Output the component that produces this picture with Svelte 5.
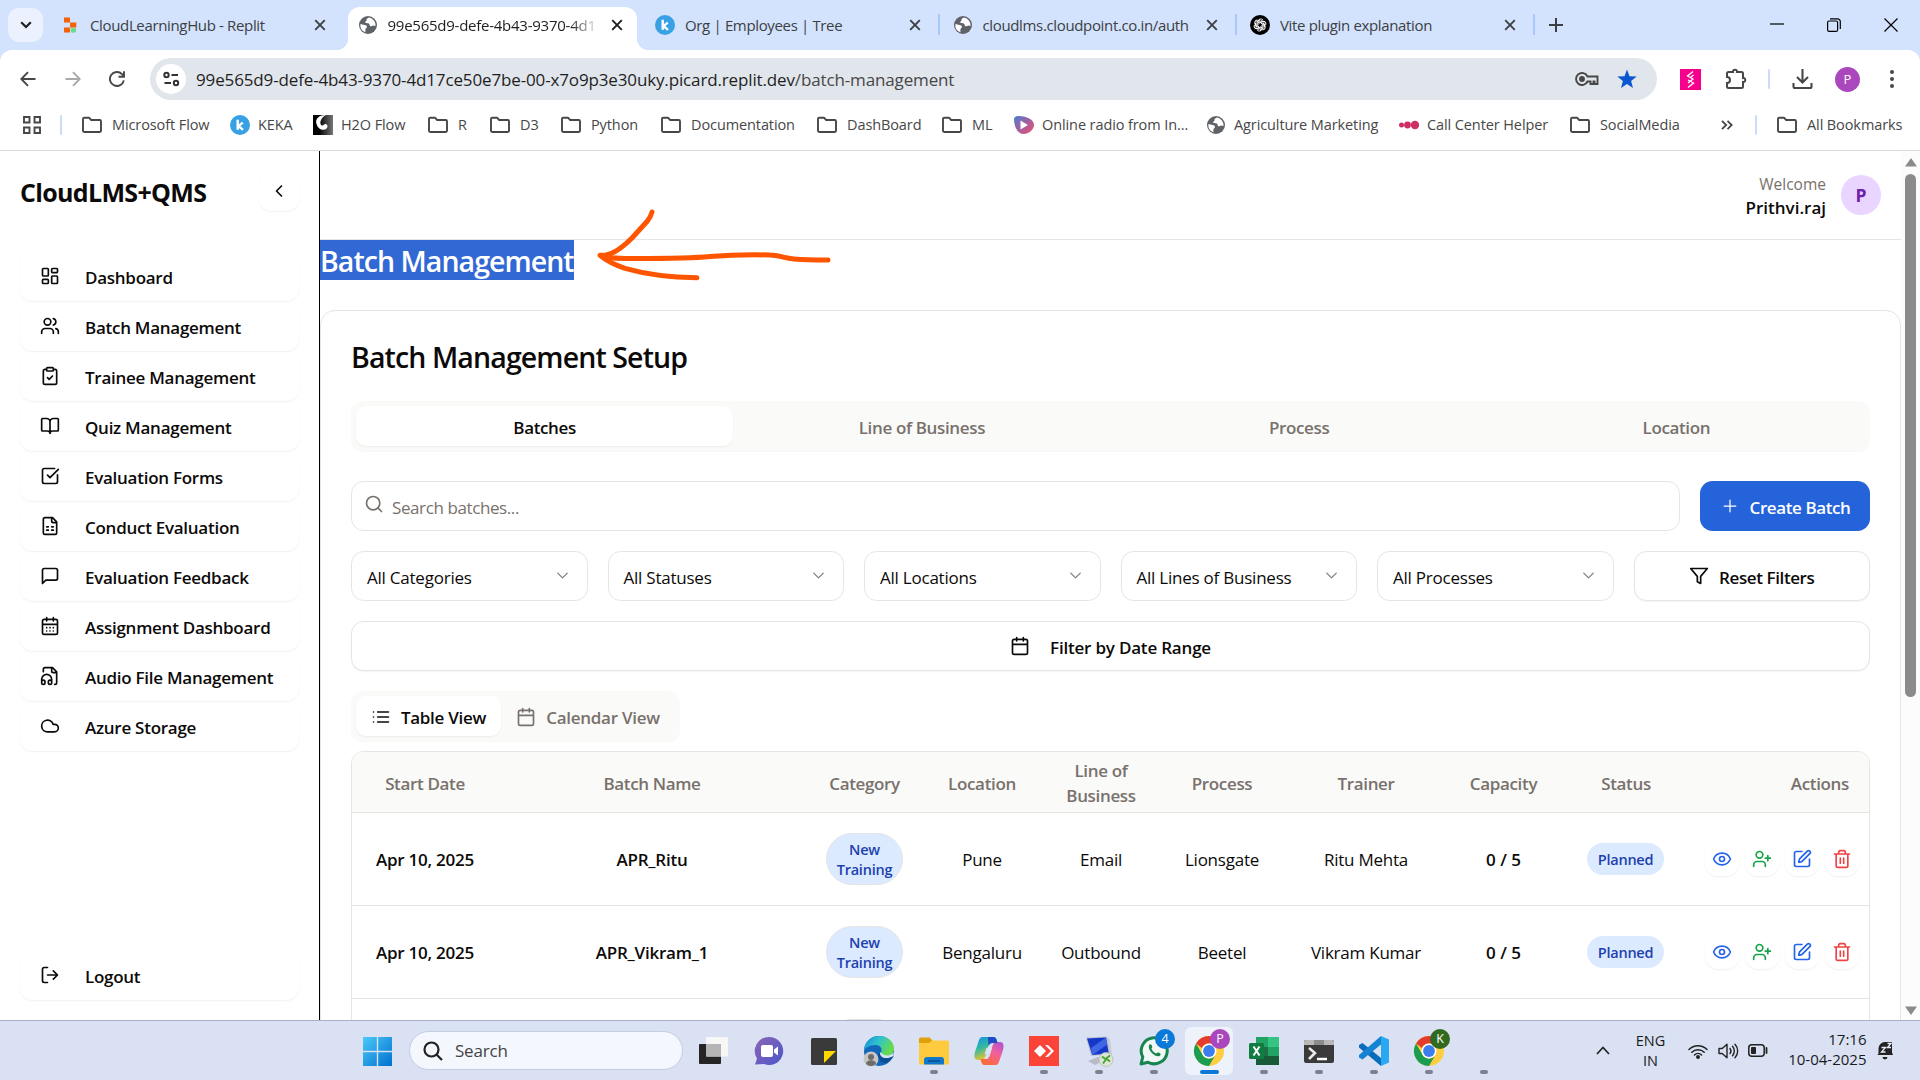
<script>
  const icons = {
    dashboard: 'M4 3h5a1 1 0 0 1 1 1v7a1 1 0 0 1-1 1H4a1 1 0 0 1-1-1V4a1 1 0 0 1 1-1zM15 3h5a1 1 0 0 1 1 1v3a1 1 0 0 1-1 1h-5a1 1 0 0 1-1-1V4a1 1 0 0 1 1-1zM15 12h5a1 1 0 0 1 1 1v7a1 1 0 0 1-1 1h-5a1 1 0 0 1-1-1v-7a1 1 0 0 1 1-1zM4 16h5a1 1 0 0 1 1 1v3a1 1 0 0 1-1 1H4a1 1 0 0 1-1-1v-3a1 1 0 0 1 1-1z',
    users: 'M16 21v-2a4 4 0 0 0-4-4H6a4 4 0 0 0-4 4v2M13 7a4 4 0 1 1-8 0a4 4 0 1 1 8 0M22 21v-2a4 4 0 0 0-3-3.87M16 3.13a4 4 0 0 1 0 7.75',
    clipboard: 'M9 2h6a1 1 0 0 1 1 1v2a1 1 0 0 1-1 1H9a1 1 0 0 1-1-1V3a1 1 0 0 1 1-1zM16 4h2a2 2 0 0 1 2 2v14a2 2 0 0 1-2 2H6a2 2 0 0 1-2-2V6a2 2 0 0 1 2-2h2M9 14l2 2 4-4',
    book: 'M12 7v14M3 18a1 1 0 0 1-1-1V4a1 1 0 0 1 1-1h5a4 4 0 0 1 4 4 4 4 0 0 1 4-4h5a1 1 0 0 1 1 1v13a1 1 0 0 1-1 1h-6a3 3 0 0 0-3 3 3 3 0 0 0-3-3z',
    check: 'M21 10.5V19a2 2 0 0 1-2 2H5a2 2 0 0 1-2-2V5a2 2 0 0 1 2-2h12.5M9 11l3 3L22 4',
    sheet: 'M15 2H6a2 2 0 0 0-2 2v16a2 2 0 0 0 2 2h12a2 2 0 0 0 2-2V7zM14 2v4a2 2 0 0 0 2 2h4M8 13h2M14 13h2M8 17h2M14 17h2',
    message: 'M21 15a2 2 0 0 1-2 2H7l-4 4V5a2 2 0 0 1 2-2h14a2 2 0 0 1 2 2z',
    days: 'M8 2v4M16 2v4M5 4h14a2 2 0 0 1 2 2v14a2 2 0 0 1-2 2H5a2 2 0 0 1-2-2V6a2 2 0 0 1 2-2zM3 10h18M8 14h.01M12 14h.01M16 14h.01M8 18h.01M12 18h.01M16 18h.01',
    audio: 'M17.5 22h.5a2 2 0 0 0 2-2V7l-5-5H6a2 2 0 0 0-2 2v3M14 2v4a2 2 0 0 0 2 2h4M2 19a2 2 0 1 1 4 0v1a2 2 0 1 1-4 0v-4a6 6 0 0 1 12 0v4a2 2 0 1 1-4 0v-1a2 2 0 1 1 4 0',
    cloud: 'M17.5 19H9a7 7 0 1 1 6.71-9h1.79a4.5 4.5 0 1 1 0 9z',
    logout: 'M9 21H5a2 2 0 0 1-2-2V5a2 2 0 0 1 2-2h4M16 17l5-5-5-5M21 12H9',
    left: 'M15 18l-6-6 6-6',
    down: 'M6 9l6 6 6-6',
    search: 'M19 11a8 8 0 1 1-16 0a8 8 0 1 1 16 0M21 21l-4.3-4.3',
    plus: 'M5 12h14M12 5v14',
    filter: 'M22 3H2l8 9.46V19l4 2v-8.54z',
    calendar: 'M8 2v4M16 2v4M5 4h14a2 2 0 0 1 2 2v14a2 2 0 0 1-2 2H5a2 2 0 0 1-2-2V6a2 2 0 0 1 2-2zM3 10h18',
    list: 'M3 6h.01M3 12h.01M3 18h.01M8 6h13M8 12h13M8 18h13',
    eye: 'M2.06 12.35a1 1 0 0 1 0-.7 10.75 10.75 0 0 1 19.88 0 1 1 0 0 1 0 .7 10.75 10.75 0 0 1-19.88 0M15 12a3 3 0 1 1-6 0a3 3 0 1 1 6 0',
    userPlus: 'M16 21v-2a4 4 0 0 0-4-4H6a4 4 0 0 0-4 4v2M13 7a4 4 0 1 1-8 0a4 4 0 1 1 8 0M19 8v6M22 11h-6',
    edit: 'M12 3H5a2 2 0 0 0-2 2v14a2 2 0 0 0 2 2h14a2 2 0 0 0 2-2v-7M18.38 2.62a1 1 0 0 1 3 3l-9.01 9.02a2 2 0 0 1-.85.5l-2.87.84a.5.5 0 0 1-.62-.62l.84-2.87a2 2 0 0 1 .5-.85z',
    trash: 'M3 6h18M19 6v14c0 1-1 2-2 2H7c-1 0-2-1-2-2V6M8 6V4c0-1 1-2 2-2h4c1 0 2 1 2 2v2M10 11v6M14 11v6'
  };

  const tabs = [
    { icon: 'replit', text: 'CloudLearningHub - Replit' },
    { icon: 'globe', text: '99e565d9-defe-4b43-9370-4d1', active: true },
    { icon: 'keka', text: 'Org | Employees | Tree', sep: true },
    { icon: 'globe', text: 'cloudlms.cloudpoint.co.in/auth', sep: true },
    { icon: 'gpt', text: 'Vite plugin explanation', sep: true }
  ];

  const bookmarks = [
    { icon: 'folder', text: 'Microsoft Flow', w: 148 },
    { icon: 'keka', text: 'KEKA', w: 83 },
    { icon: 'h2o', text: 'H2O Flow', w: 115 },
    { icon: 'folder', text: 'R', w: 62 },
    { icon: 'folder', text: 'D3', w: 71 },
    { icon: 'folder', text: 'Python', w: 100 },
    { icon: 'folder', text: 'Documentation', w: 156 },
    { icon: 'folder', text: 'DashBoard', w: 125 },
    { icon: 'folder', text: 'ML', w: 72 },
    { icon: 'radio', text: 'Online radio from In...', w: 192 },
    { icon: 'globe', text: 'Agriculture Marketing', w: 193 },
    { icon: 'dots', text: 'Call Center Helper', w: 171 },
    { icon: 'folder', text: 'SocialMedia', w: 150 }
  ];

  const nav = [
    ['dashboard', 'Dashboard'],
    ['users', 'Batch Management'],
    ['clipboard', 'Trainee Management'],
    ['book', 'Quiz Management'],
    ['check', 'Evaluation Forms'],
    ['sheet', 'Conduct Evaluation'],
    ['message', 'Evaluation Feedback'],
    ['days', 'Assignment Dashboard'],
    ['audio', 'Audio File Management'],
    ['cloud', 'Azure Storage']
  ];

  const sections = ['Batches', 'Line of Business', 'Process', 'Location'];
  const filters = ['All Categories', 'All Statuses', 'All Locations', 'All Lines of Business', 'All Processes'];
  const columns = ['Start Date', 'Batch Name', 'Category', 'Location', 'Line of Business', 'Process', 'Trainer', 'Capacity', 'Status', 'Actions'];
  const rows = [
    ['Apr 10, 2025', 'APR_Ritu', 'Pune', 'Email', 'Lionsgate', 'Ritu Mehta'],
    ['Apr 10, 2025', 'APR_Vikram_1', 'Bengaluru', 'Outbound', 'Beetel', 'Vikram Kumar'],
    ['', '', '', '', '', '']
  ];
  const tasks = [
    { n: 'view' }, { n: 'teams' }, { n: 'sticky' }, { n: 'edge' }, { n: 'explorer', run: true }, { n: 'copilot' },
    { n: 'anydesk', run: true }, { n: 'remote', run: true }, { n: 'whatsapp', run: true, badge: '4' },
    { n: 'chrome', run: true, badge: 'P', active: true }, { n: 'excel', run: true }, { n: 'terminal', run: true },
    { n: 'vscode', run: true }, { n: 'chrome', run: true, badge: 'K' }, { n: 'blank', run: true }
  ];
</script>

{#snippet ico(name, size = 20, sw = 2)}
  <svg class="ico" width={size} height={size} viewBox="0 0 24 24" fill="none" stroke="currentColor" stroke-width={sw} stroke-linecap="round" stroke-linejoin="round"><path d={icons[name]} /></svg>
{/snippet}

{#snippet closeX()}
  <svg class="close" width="12" height="12" viewBox="0 0 12 12" stroke="currentColor" stroke-width="1.9"><path d="M1.2 1.2l9.6 9.6M10.800 1.2l-9.6 9.6" /></svg>
{/snippet}

{#snippet fav(name)}
  {#if name === 'folder'}
    <svg width="20" height="20" viewBox="0 0 20 20" fill="none" stroke="#474747" stroke-width="1.9" stroke-linejoin="round"><path d="M1 15.500V4a1.200 1.200 0 0 1 1.200-1.200h5l2 2.200h8.600A1.200 1.200 0 0 1 19 6.200v9.600a1.200 1.200 0 0 1-1.200 1.200H2.200A1.200 1.200 0 0 1 1 15.800z" /></svg>
  {:else if name === 'keka'}
    <svg width="20" height="20" viewBox="0 0 20 20"><circle cx="10" cy="10" r="10" fill="#38a1e6" /><path d="M7.700 4.800v10M12.800 7.600L8.500 11l4.500 3.800" fill="none" stroke="#fff" stroke-width="2.400" /></svg>
  {:else if name === 'globe'}
    <svg width="20" height="20" viewBox="0 0 20 20"><circle cx="10" cy="10" r="9" fill="#5f6368" /><path d="M11 2.500c-1.500.7-3 1.500-2.500 2.800.4 1-1.500 1-1.300 2.200.2 1.200 3 .4 4 1.400.8.8.3 2 1.300 2.300 1.200.4 1.500-1 3-.8.900.1 1.400.7 2.100.5a8 8 0 0 0-6.600-8.400zM2.400 9c1.500 0 2.500.8 4 .9 1.600.2 2.600.7 2.500 2.100-.1 1.200-1.500 1.300-1.500 2.600v2.600A7.700 7.700 0 0 1 2.400 9z" fill="#fff" /></svg>
  {:else if name === 'replit'}
    <svg width="20" height="20" viewBox="0 0 20 20"><path d="M4 2.500h6v5H4zM10 7.500h6.300v5H10zM4 12.500h6v5H4z" fill="#f26207" /><rect x="10.700" y="12.800" width="5.400" height="5" rx="2" fill="#6fd98b" /></svg>
  {:else if name === 'gpt'}
    <svg width="20" height="20" viewBox="0 0 20 20"><circle cx="10" cy="10" r="10" fill="#000" /><g fill="none" stroke="#fff" stroke-width="1">{#each [0, 60, 120, 180, 240, 300] as a}<path transform="rotate({a} 10 10)" d="M8 10V6.300a2.700 2.700 0 0 1 5-1M8 7.700l3.400-2 2.800 1.600" />{/each}</g></svg>
  {:else if name === 'h2o'}
    <svg width="20" height="20" viewBox="0 0 20 20"><defs><linearGradient id="h2" x1="0" x2="1"><stop offset=".3" stop-color="#000" /><stop offset="1" stop-color="#777" /></linearGradient></defs><rect width="20" height="20" fill="url(#h2)" /><path d="M13 0C5.500 0 2 4 3.500 9c1.200 4.500 5 6.500 8.500 5.500 3-1 3.500-5 .5-5.500-1.500-.2-1.800 2-3.500 1.500C6 9.500 7 3 13 0z" fill="#fff" /></svg>
  {:else if name === 'radio'}
    <svg width="20" height="20" viewBox="0 0 20 20"><defs><linearGradient id="rd" x1="0" y1="0" x2="1" y2="1"><stop offset="0" stop-color="#4a7fd0" /><stop offset=".5" stop-color="#a1609f" /><stop offset="1" stop-color="#f0506e" /></linearGradient></defs><path d="M0 4C0 2 2 1 5 1c6 0 15 3 15 9 0 5-6 9-10 9C3 19 0 11 0 4z" fill="url(#rd)" /><path d="M6.500 5.500L14 10l-7.500 4.500z" fill="#fff" /></svg>
  {:else if name === 'dots'}
    <svg width="20" height="20" viewBox="0 0 20 20" fill="#cf2e63"><circle cx="2.500" cy="10" r="2.500" /><circle cx="8.500" cy="10" r="3.400" /><circle cx="16" cy="10" r="4.200" /></svg>
  {/if}
{/snippet}

{#snippet task(n)}
  <svg width="34" height="34" viewBox="0 0 34 34">
    {#if n === 'view'}
      <rect x="2" y="10" width="22" height="20" rx="1" fill="#252525" /><rect x="9" y="3" width="22" height="19.500" rx="1" fill="#f7f7f7" /><rect x="9" y="10" width="15" height="12.500" fill="#b5b5b5" />
    {:else if n === 'teams'}
      <defs><linearGradient id="tm" x1="0" x2="1" y2="1"><stop offset="0" stop-color="#8d65b4" /><stop offset="1" stop-color="#4b55cc" /></linearGradient></defs><path d="M17 3a14 14 0 1 1-5 27l-9 .5 2-6A14 14 0 0 1 17 3z" fill="url(#tm)" /><rect x="9" y="11" width="12" height="12" rx="2" fill="#fff" /><path d="M22 15.500l4-3v9l-4-3z" fill="#fff" />
    {:else if n === 'sticky'}
      <rect x="4" y="4" width="26" height="27" rx="1.500" fill="#3a3a3a" /><path d="M17 29V17h12z" fill="#ffd800" />
    {:else if n === 'edge'}
      <defs><linearGradient id="ed" x1="0" y1="0" x2="1" y2=".4"><stop offset="0" stop-color="#1687d9" /><stop offset=".5" stop-color="#2ec3cf" /><stop offset="1" stop-color="#68dc4a" /></linearGradient></defs><circle cx="17" cy="17" r="15" fill="#1267bb" /><path d="M2 17C2 8 9 2 17 2c9 0 15 6 15 12.500 0 5-4 7.500-8 7.500-4 0-6-1.500-5-3.500 2-4-1-7.500-5.500-7.500C8 11 3 14 2 17z" fill="url(#ed)" /><path d="M32 22c-5 3.500-15 2-13-4-5 1-4 10 4 11 3 0 6-3 9-7z" fill="#0b4f94" /><path d="M18 18c-1 6 7 8 13 4l1-4c-4 5-10 4-14 0z" fill="#dae3f3" /><circle cx="9" cy="25" r="7.500" fill="#c8c6c2" /><circle cx="9" cy="23" r="3" fill="#6e6c69" /><path d="M4 30c0-5 10-5 10 0a7 7 0 0 1-10 0z" fill="#6e6c69" />
    {:else if n === 'explorer'}
      <path d="M2 5a1.500 1.500 0 0 1 1.500-1.500h9L16 7v6H2z" fill="#e0a008" /><path d="M2 9h10l3-2.500h15.500A1.500 1.500 0 0 1 32 8v21a1.500 1.500 0 0 1-1.500 1.500h-27A1.500 1.500 0 0 1 2 29z" fill="#fecb3e" /><path d="M7 30.500V26a3 3 0 0 1 3-3h14a3 3 0 0 1 3 3v4.500z" fill="#0f77cc" /><path d="M11 27h12" stroke="#0a4d8c" stroke-width="1.500" />
    {:else if n === 'copilot'}
      <defs><linearGradient id="ca" x1="0" y1="0" x2=".4" y2="1"><stop offset="0" stop-color="#158fe6" /><stop offset=".5" stop-color="#32b9a0" /><stop offset="1" stop-color="#f6c626" /></linearGradient><linearGradient id="cb" x1="1" y1="0" x2=".4" y2="1"><stop offset="0" stop-color="#a951d8" /><stop offset=".5" stop-color="#f0609c" /><stop offset="1" stop-color="#fb6b3c" /></linearGradient></defs><path d="M10 3h11c3 0 3.500 2 4.500 6h-5c-3 0-4 2-5 6l-2 7c-1 3-2 4-4 4H6c-4 0-4-4-3-8l3-9c1-3 2-6 4-6z" fill="url(#ca)" /><path d="M24 31H13c-3 0-3.500-2-4.500-6h5c3 0 4-2 5-6l2-7c1-3 2-4 4-4H28c4 0 4 4 3 8l-3 9c-1 3-2 6-4 6z" fill="url(#cb)" /><path d="M16 3h5c3 0 3.500 2 4.500 6h-5c-2 0-3.500 1.500-4 3z" fill="#1f4bc4" /><path d="M14.500 14h5.500l-2 6h-5.500z" fill="#dae3f3" />
    {:else if n === 'anydesk'}
      <rect x="2" y="2" width="30" height="30" fill="#fb4437" /><path d="M13 11l6 6-6 6-6-6z" fill="#fff" /><path d="M18 11h3l6 6-6 6h-3l6-6z" fill="#fff" />
    {:else if n === 'remote'}
      <path d="M24 3l4 2 2 16-4 1z" fill="#c8ccd4" /><path d="M4 3.500l21-1 3 18-19 1.500z" fill="#b9c0d0" /><path d="M5 4.500l19-1 2.800 16-16.500 1.500z" fill="#1538c8" /><path d="M24 3.500l1.200 7L10.500 21 9 14z" fill="#3f66e6" /><path d="M6 27l10-4 7 3-10 5z" fill="#b8bcc6" /><circle cx="24" cy="25.500" r="7" fill="#dde4d8" stroke="#b4bcae" stroke-width=".8" /><path d="M20 22.500l4 3-3 4M28 21.500l-4 3 4 3" fill="none" stroke="#49a32e" stroke-width="1.800" />
    {:else if n === 'whatsapp'}
      <path d="M4 30l1.800-7A13 13 0 1 1 11 28.200z" fill="#f3f7f5" stroke="#17854f" stroke-width="3" stroke-linejoin="round" /><path d="M12 11c1.500-1.500 2.500-.5 3.200 1.500.5 1.200-1.200 1.800-.6 2.800a9 9 0 0 0 4 4c1 .5 1.600-1.200 2.800-.8 2 .8 3 1.500 1.700 3-3 3.500-13-4.500-11.100-10.500z" fill="#17854f" />
    {:else if n === 'chrome'}
      <circle cx="17" cy="17" r="15" fill="#ffcd40" /><path d="M4 9.500A15 15 0 0 1 30 9.500H17a7.500 7.500 0 0 0-7 4.500z" fill="#e33b2e" /><path d="M4 9.500a15 15 0 0 0 13 22.500l6.500-11.300a7.500 7.500 0 0 1-13 0z" fill="#1a9d50" /><circle cx="17" cy="17" r="7.500" fill="#fff" /><circle cx="17" cy="17" r="5.900" fill="#3b7ded" />
    {:else if n === 'excel'}
      <rect x="9" y="3" width="23" height="28" rx="1.500" fill="#1d7044" /><path d="M9 3h12v10H9z" fill="#21a366" /><path d="M21 3h11v10H21z" fill="#35c481" /><path d="M21 13h11v9H21z" fill="#21a366" /><path d="M9 22h23v9H9z" fill="#175c37" /><rect x="2" y="9" width="15" height="16" rx="1.500" fill="#107c41" /><path d="M6.500 12.500l6 9M12.500 12.500l-6 9" stroke="#fff" stroke-width="2" />
    {:else if n === 'terminal'}
      <rect x="2" y="6" width="30" height="23" rx="2" fill="#3a3a3a" /><path d="M4 6h26a2 2 0 0 1 2 2v3H2V8a2 2 0 0 1 2-2z" fill="#b8b8b8" /><path d="M12 6h10v5H12z" fill="#8b8b8b" /><path d="M7 14l6 5-6 6" fill="none" stroke="#eee" stroke-width="2.500" /><path d="M15 25h10" stroke="#fff" stroke-width="2.500" />
    {:else if n === 'vscode'}
      <path d="M24 32L2 13.500V11l3.500-2L24 24z" fill="#0a6cba" /><path d="M24 2v8.500L5.500 25.500 2 23.500V21z" fill="#1583d4" /><path d="M24 2l8 3.500v23L24 32z" fill="#2aa8f2" />
    {/if}
  </svg>
{/snippet}

<div class="screen">
  <header class="tabstrip">
    <div class="tabsearch"><svg width="12" height="8" viewBox="0 0 12 8" fill="none" stroke="#1f1f1f" stroke-width="2.200"><path d="M1.200 1.200L6 6l4.800-4.800" /></svg></div>
    {#each tabs as t}
      <div class="tab" class:active={t.active} class:sep={t.sep}>
        {@render fav(t.icon)}
        <span class="tabtext">{t.text}</span>
        {@render closeX()}
      </div>
    {/each}
    <svg class="newtab" width="14" height="14" viewBox="0 0 14 14" stroke="#3c3f43" stroke-width="2"><path d="M7 0v14M0 7h14" /></svg>
    <div class="winctl">
      <svg width="14" height="14" viewBox="0 0 14 14" stroke="#000" stroke-width="1.200"><path d="M0 6h14" /></svg>
      <svg width="14" height="14" viewBox="0 0 14 14" fill="none" stroke="#000" stroke-width="1.200"><rect x=".6" y="3" width="10" height="10.400" rx="1.500" /><path d="M3 .8h7.500a2.800 2.800 0 0 1 2.800 2.800V11" /></svg>
      <svg width="14" height="14" viewBox="0 0 14 14" stroke="#000" stroke-width="1.200"><path d="M.5.5l13 13M13.500.5l-13 13" /></svg>
    </div>
  </header>

  <div class="chrome">
    <div class="toolbar">
      <svg class="tb" width="16" height="16" viewBox="0 0 16 16" fill="none" stroke="#474747" stroke-width="1.900"><path d="M15.500 8H1.500M8 1.200L1.300 8 8 14.800" /></svg>
      <svg class="tb" width="16" height="16" viewBox="0 0 16 16" fill="none" stroke="#a9a9a9" stroke-width="1.900"><path d="M.5 8h14M8 1.200L14.700 8 8 14.800" /></svg>
      <svg class="tb" width="16" height="16" viewBox="0 0 16 16" fill="none" stroke="#474747" stroke-width="1.900"><path d="M14.800 9.300A7 7 0 1 1 13 3.200l1.800 1.900M15 .3v5.500H9.500" /></svg>
      <div class="omnibox">
        <div class="site"><svg width="17" height="16" viewBox="0 0 17 16" fill="none" stroke="#333" stroke-width="2"><circle cx="3.500" cy="4" r="2.200" /><path d="M8.500 4H15M1.500 12H8" /><circle cx="13" cy="12" r="2.200" /></svg></div>
        <span class="url">99e565d9-defe-4b43-9370-4d17ce50e7be-00-x7o9p3e30uky.picard.replit.dev<i>/batch-management</i></span>
        <svg class="key" width="24" height="16" viewBox="0 0 24 16" fill="none" stroke="#474747" stroke-width="1.900"><path d="M12.500 5.500A6 6 0 1 0 12.500 10.500H15.500v2.500h3v-2.500h1v2.500h3V5.500z" /><circle cx="7" cy="8" r="2" fill="#474747" /></svg>
        <svg width="20" height="20" viewBox="0 0 20 20" fill="#0b57d0"><path d="M10 .5l2.500 6.700 7.200.3-5.600 4.500 1.900 7-6-4-6 4 1.900-7L.3 7.500l7.200-.3z" /></svg>
      </div>
      <div class="ext">
        <svg width="21" height="21" viewBox="0 0 21 21"><rect width="21" height="21" fill="#f6018d" /><path d="M13 2.500L7.500 7l5.500 3-5 4M13.500 6l-3 2.500M8 11l5.500 3L8 18.500" fill="none" stroke="#fff" stroke-width="1.300" /></svg>
        <svg width="22" height="22" viewBox="0 0 22 22"><path d="M2 5.500a1.500 1.500 0 0 1 1.500-1.500H8c-.5-3 4.500-3 4 0h4.500A1.500 1.500 0 0 1 18 5.500V10c3-.5 3 4.500 0 4v4.500a1.500 1.500 0 0 1-1.500 1.500h-13A1.500 1.500 0 0 1 2 18.500V15c4 0 4-6 0-6z" fill="none" stroke="#474747" stroke-width="2" /></svg>
        <b class="bar"></b>
        <svg width="21" height="22" viewBox="0 0 21 22" fill="none" stroke="#474747" stroke-width="2.100"><path d="M10.500 1v13M5 9l5.500 5.500L16 9M1.500 15v3.500A1.500 1.500 0 0 0 3 20h15a1.500 1.500 0 0 0 1.500-1.500V15" /></svg>
        <span class="me">P</span>
        <svg width="4" height="18" viewBox="0 0 4 18" fill="#474747"><circle cx="2" cy="2" r="2" /><circle cx="2" cy="9" r="2" /><circle cx="2" cy="16" r="2" /></svg>
      </div>
    </div>
    <div class="bookmarks">
      <svg class="apps" width="18" height="18" viewBox="0 0 18 18" fill="none" stroke="#474747" stroke-width="1.900"><path d="M1 1h5.500v5.500H1zM11.500 1H17v5.500h-5.500zM1 11.500h5.500V17H1zM11.500 11.500H17V17h-5.500z" /></svg>
      <b class="bar"></b>
      {#each bookmarks as b}
        <div class="bm" class:fd={b.icon === 'folder'} style:width="{b.w}px">{@render fav(b.icon)}<span>{b.text}</span></div>
      {/each}
      <svg class="more" width="12" height="10" viewBox="0 0 12 10" fill="none" stroke="#474747" stroke-width="1.800"><path d="M1 .8L5.200 5 1 9.200M6.500.8L10.700 5 6.500 9.200" /></svg>
      <b class="bar"></b>
      <div class="bm fd last">{@render fav('folder')}<span>All Bookmarks</span></div>
    </div>
  </div>

  <div class="page">
    <aside>
      <div class="brand"><h1>CloudLMS+QMS</h1><button class="collapse">{@render ico('left')}</button></div>
      <nav>
        {#each nav as [icon, label]}
          <a class="item">{@render ico(icon)}<span>{label}</span></a>
        {/each}
      </nav>
      <a class="item logout">{@render ico('logout')}<span>Logout</span></a>
    </aside>

    <main>
      <div class="topbar">
        <div class="who"><span>Welcome</span><strong>Prithvi.raj</strong></div>
        <div class="avatar">P</div>
      </div>
      <div class="heading"><h2>Batch Management</h2>
        <svg class="arrow" width="240" height="76" viewBox="595 208 240 76" fill="none" stroke="#ff5500" stroke-width="5" stroke-linecap="round" stroke-linejoin="round">
          <path d="M652 212c-1 4-2 6-5 9.500L632 238c-11 11-20 16-26 17l-6 .3c6 5 16 10 25 13 21 6 44 9 72 9.500" /><path d="M603 257c10 1.500 20 1.500 32 1.500 35 0 55 0 75-2 20-1.600 42-1.900 60-1.500 8 0 14 3 24 4 10 .8 20 1 34 1" />
        </svg>
      </div>

      <section class="card">
        <h3>Batch Management Setup</h3>
        <div class="sections">
          {#each sections as s, i}<div class="seg" class:on={i === 0}>{s}</div>{/each}
        </div>
        <div class="searchrow">
          <div class="field search">{@render ico('search')}<span>Search batches...</span></div>
          <button class="create">{@render ico('plus', 20, 1.500)}<span>Create Batch</span></button>
        </div>
        <div class="filters">
          {#each filters as f}<div class="field select"><span>{f}</span>{@render ico('down', 19, 1.700)}</div>{/each}
          <button class="field reset">{@render ico('filter')}<span>Reset Filters</span></button>
        </div>
        <button class="field range">{@render ico('calendar')}<span>Filter by Date Range</span></button>
        <div class="views">
          <div class="view on">{@render ico('list')}<span>Table View</span></div>
          <div class="view">{@render ico('calendar')}<span>Calendar View</span></div>
        </div>
        <div class="table">
          <div class="row head">
            {#each columns as c, i}<div class="cell" class:right={i === 9}>{c}</div>{/each}
          </div>
          {#each rows as r}
            <div class="row">
              <div class="cell m">{r[0]}</div>
              <div class="cell m">{r[1]}</div>
              <div class="cell"><span class="tag new">{#if r[0]}New<br />Training{/if}</span></div>
              <div class="cell">{r[2]}</div>
              <div class="cell">{r[3]}</div>
              <div class="cell">{r[4]}</div>
              <div class="cell">{r[5]}</div>
              <div class="cell m cap">{r[0] ? '0 / 5' : ''}</div>
              <div class="cell">{#if r[0]}<span class="tag planned">Planned</span>{/if}</div>
              <div class="cell acts">
                {#if r[0]}
                  <button class="blue">{@render ico('eye')}</button>
                  <button class="green">{@render ico('userPlus')}</button>
                  <button class="blue">{@render ico('edit')}</button>
                  <button class="red">{@render ico('trash')}</button>
                {/if}
              </div>
            </div>
          {/each}
        </div>
      </section>
    </main>

    <div class="scroll">
      <svg width="12" height="9" viewBox="0 0 12 9" fill="#8b8b8b"><path d="M6 0l6 8.500H0z" /></svg>
      <div class="thumb"></div>
      <svg width="12" height="9" viewBox="0 0 12 9" fill="#8b8b8b"><path d="M6 9L0 .5h12z" /></svg>
    </div>
  </div>

  <footer class="taskbar">
    <svg class="win" width="29" height="29" viewBox="0 0 29 29"><defs><linearGradient id="w" x1="0" y1="0" x2="1" y2="1"><stop offset="0" stop-color="#4cc9f8" /><stop offset="1" stop-color="#0070d0" /></linearGradient></defs><path d="M0 0h13.800v13.800H0zM15.200 0H29v13.800H15.200zM0 15.200h13.800V29H0zM15.200 15.200H29V29H15.200z" fill="url(#w)" /></svg>
    <div class="tsearch"><svg width="20" height="20" viewBox="0 0 20 20" fill="none" stroke="#222" stroke-width="2.200"><circle cx="8.500" cy="8.500" r="7" /><path d="M13.500 13.500l5.500 5.500" /></svg><span>Search</span></div>
    {#each tasks as t}
      <div class="task" class:active={t.active}>
        <div class="tile">{@render task(t.n)}{#if t.badge}<span class="badge b{t.badge}">{t.badge}</span>{/if}</div>
        {#if t.run}<i></i>{/if}
      </div>
    {/each}
    <div class="tray">
      <svg class="up" width="14" height="9" viewBox="0 0 14 9" fill="none" stroke="#222" stroke-width="1.700"><path d="M1 8l6-6.500L13 8" /></svg>
      <div class="lang">ENG<br />IN</div>
      <svg class="wifi" width="20" height="16" viewBox="0 0 20 16" fill="none" stroke="#222" stroke-width="1.500" stroke-linecap="round"><path d="M1 6.500a12.500 12.500 0 0 1 18 0M3.800 9.300a8.600 8.600 0 0 1 12.400 0M6.500 12a5 5 0 0 1 7 0" /><circle cx="10" cy="14" r="1.200" fill="#222" /></svg>
      <svg class="snd" width="21" height="16" viewBox="0 0 21 16" fill="none" stroke="#222" stroke-width="1.400" stroke-linejoin="round" stroke-linecap="round"><path d="M1 5.500h3.200L9 1.200v13.600l-4.800-4.300H1zM12 5.500a4 4 0 0 1 0 5M14.500 3.300a7 7 0 0 1 0 9.400M17 1.200a10 10 0 0 1 0 13.600" /></svg>
      <svg class="bat" width="20" height="13" viewBox="0 0 20 13"><rect x=".8" y=".8" width="15.400" height="11.400" rx="3" fill="none" stroke="#222" stroke-width="1.500" /><rect x="3" y="3" width="5" height="7" rx="1" fill="#222" /><path d="M18.500 4v5" stroke="#222" stroke-width="1.800" stroke-linecap="round" /></svg>
      <div class="clock">17:16<br />10-04-2025</div>
      <svg class="bell" width="18" height="20" viewBox="0 0 18 20"><path d="M2.500 14V8.500A6.500 6.500 0 0 1 9 2h7v10.500l1 2.500H1z" fill="#222" /><path d="M6.500 17h5a2.500 2.500 0 0 1-5 0z" fill="#222" /><path d="M5.500 7.500h4l-4 4.500h4M11.500 3.500h3.500l-3.500 4H15" fill="none" stroke="#e8edf8" stroke-width="1.300" /></svg>
    </div>
  </footer>
</div>

<style>
  :global(body) { margin: 0; overflow: hidden; }
  * { box-sizing: border-box; }
  .screen { width: 1920px; height: 1080px; overflow: hidden; display: flex; flex-direction: column; background: #fff; font-family: 'Open Sans', 'Noto Sans', sans-serif; font-stretch: 93%; color: #0c0a09; white-space: nowrap; }
  svg { flex: none; display: block; }
  button { font: inherit; letter-spacing: inherit; color: inherit; padding: 0; margin: 0; border: 0; background: #fff; }
  h1, h2, h3 { margin: 0; }

  .tabstrip { height: 50px; flex: none; background: #d3e3fd; display: flex; align-items: center; padding-left: 8px; }
  .tabsearch { width: 35px; height: 34px; border-radius: 11px; background: #ebf1fe; display: grid; place-items: center; margin-right: 4px; }
  .tab { position: relative; width: 297.500px; height: 43px; margin-top: 7px; padding: 0 18px 7px 13px; display: flex; align-items: center; font-size: 15px; letter-spacing: -.35px; color: #3c4043; flex: none; }
  .tab > svg:first-child { z-index: 1; }
  .tab.sep::after { content: ''; position: absolute; right: 0; top: 7px; width: 2px; height: 21px; background: #a8c7fa; }
  .tab.active { color: #1f1f1f; }
  .tab.active::before { content: ''; position: absolute; left: 3px; right: 5px; top: 0; bottom: 0; background: #fff; border-radius: 12px 12px 0 0; }
  .tab.active::after { content: ''; position: absolute; left: -9px; right: -7px; bottom: 0; height: 12px; background: radial-gradient(circle at 0 0, transparent 12px, #fff 12.500px) left / 12px 12px no-repeat, radial-gradient(circle at 100% 0, transparent 12px, #fff 12.500px) right / 12px 12px no-repeat; }
  .tabtext { margin-left: 10px; z-index: 1; }
  .active .tabtext { letter-spacing: -.25px; mask-image: linear-gradient(90deg, #000 182px, transparent 212px); }
  .close { margin-left: auto; z-index: 1; margin-right: 1px; }
  .newtab { margin-left: 14px; }
  .winctl { margin-left: auto; display: flex; gap: 43px; padding-right: 22px; }

  .chrome { height: 101px; flex: none; background: linear-gradient(#d3e3fd 0 14px, #fff 14px); border-bottom: 1px solid #dcdcdc; }
  .toolbar { height: 58px; background: #fff; border-radius: 12px 12px 0 0; display: flex; align-items: center; padding-left: 20px; }
  .tb { margin-right: 28.500px; }
  .omnibox { width: 1507px; height: 42px; border-radius: 21px; background: #e1e5ec; display: flex; align-items: center; padding: 0 20px 0 6px; margin-left: -3.500px; flex: none; }
  .site { width: 30px; height: 30px; border-radius: 50%; background: #fff; display: grid; place-items: center; margin-right: 10px; }
  .url { font-size: 17px; letter-spacing: -.14px; color: #1f1f1f; flex: 1; padding-top: 1px; }
  .url i { font-style: normal; color: #474747; }
  .key { margin-right: 18px; }
  .ext { display: flex; align-items: center; margin-left: 23px; flex: 1; }
  .ext svg { margin-right: 24px; }
  .bar { width: 2px; height: 20px; background: #c9dcfb; border-radius: 1px; flex: none; }
  .ext .bar { margin-right: 22px; margin-left: -3px; }
  .me { width: 25px; height: 25px; border-radius: 50%; background: #ab47bc; color: #fff; font-size: 13px; display: grid; place-items: center; margin: 0 30px 0 -2px; }
  .ext svg:last-child { margin: 0; }
  .bookmarks { height: 34px; display: flex; align-items: center; padding-left: 23px; font-size: 14.500px; letter-spacing: -.1px; color: #474747; }
  .bookmarks span { padding-bottom: 2px; }
  .apps { margin-right: 19px; }
  .apps + .bar { margin-right: 20px; }
  .bm { display: flex; align-items: center; gap: 8px; flex: none; }
  .bm.fd { gap: 10px; }
  .more { margin-right: 22px; margin-left: 1px; }
  .more + .bar { margin-right: 20px; }

  .page { height: 869px; flex: none; display: flex; overflow: hidden; }
  aside { width: 320px; border-right: 1px solid #000; display: flex; flex-direction: column; padding: 20px 20px 20px; flex: none; }
  .brand { display: flex; justify-content: space-between; height: 40px; margin-bottom: 40px; }
  h1 { font-size: 25px; font-weight: 700; line-height: 42px; letter-spacing: -.67px; }
  .collapse { width: 40px; height: 40px; }
  .collapse, .item, .acts button { border-radius: 12.500px; box-shadow: 0 1px 2px rgba(0, 0, 0, .06); display: flex; align-items: center; justify-content: center; }
  nav { flex: 1; }
  .item { height: 50px; justify-content: flex-start; padding-left: 20px; gap: 25px; font-size: 17px; letter-spacing: -.27px; font-weight: 600; }
  .item span { padding-top: 3px; }

  main { width: 1581px; flex: none; overflow: hidden; letter-spacing: -.23px; }
  .topbar { height: 89px; border-bottom: 1px solid #e7e5e4; display: flex; justify-content: flex-end; align-items: center; padding-right: 20px; gap: 15px; }
  .who { display: flex; flex-direction: column; text-align: right; font-size: 15.500px; line-height: 24px; color: #78716c; padding-top: 2px; letter-spacing: 0; }
  .who strong { font-size: 17px; font-weight: 600; color: #0c0a09; }
  .avatar { width: 40px; height: 40px; border-radius: 50%; background: #e9d5ff; color: #6b21a8; font-size: 17.500px; font-weight: 700; display: grid; place-items: center; }
  .heading { position: relative; height: 70px; }
  h2 { width: 254px; height: 40px; line-height: 42px; background: #3268d3; color: #fff; font-size: 28.500px; font-weight: 600; letter-spacing: -.95px; }
  .arrow { position: absolute; left: 275px; top: -32px; }
  .card { border: 1px solid #e7e5e4; border-radius: 15px 15px 0 0; padding: 30px; height: 800px; }
  h3 { font-size: 28.500px; font-weight: 600; line-height: 32px; letter-spacing: -.88px; height: 60px; }
  .sections { height: 50px; border-radius: 12px; background: #fafaf9; padding: 5px; display: grid; grid-template-columns: repeat(4, 1fr); margin-bottom: 30px; box-shadow: 0 1px 1px rgba(0, 0, 0, .03); }
  .seg, .view { display: flex; align-items: center; justify-content: center; font-size: 17px; letter-spacing: -.36px; font-weight: 600; color: #78716c; border-radius: 10px; padding-top: 2px; }
  .seg.on, .view.on { background: #fff; color: #0c0a09; box-shadow: 0 1px 2px rgba(0, 0, 0, .06); }
  .searchrow { display: flex; gap: 20px; margin-bottom: 20px; }
  .field { height: 50px; border: 1px solid #e7e5e4; border-radius: 12.500px; display: flex; align-items: center; font-size: 17px; }
  .field span { padding-top: 3px; }
  .search { flex: 1; padding-left: 12px; gap: 8px; color: #78716c; letter-spacing: -.4px; }
  .search .ico { margin-top: -4px; }
  .ico { flex: none; }
  .create { width: 170px; height: 50px; border-radius: 12.500px; background: #2563db; color: #fff; font-size: 17px; letter-spacing: -.4px; font-weight: 600; display: flex; align-items: center; justify-content: center; gap: 10px; }
  .create span { padding-top: 2px; }
  .filters { display: grid; grid-template-columns: repeat(6, 1fr); gap: 20px; margin-bottom: 20px; }
  .select { justify-content: space-between; padding: 0 15px 0 15px; }
  .select .ico { color: #858281; margin-top: -1px; }
  .reset, .range { justify-content: center; gap: 10px; font-weight: 600; letter-spacing: -.4px; box-shadow: 0 1px 2px rgba(0, 0, 0, .05); }
  .range { width: 100%; gap: 20px; margin-bottom: 20px; letter-spacing: -.2px; }
  .views { width: 329px; height: 50px; background: #fafaf9; border-radius: 12px; padding: 5px; display: grid; grid-template-columns: 145px 1fr; margin-bottom: 10px; box-shadow: 0 1px 1px rgba(0, 0, 0, .03); }
  .view { gap: 10px; letter-spacing: -.28px; }
  .table { border: 1px solid #e7e5e4; border-radius: 12px 12px 0 0; overflow: hidden; }
  .row { display: grid; grid-template-columns: 146px 308px 117px 118px 120px 122px 166px 109px 136px 1fr; height: 93px; border-bottom: 1px solid #e7e5e4; font-size: 17px; }
  .head { height: 61px; background: #fafaf9; color: #78716c; font-weight: 600; line-height: 25px; letter-spacing: -.35px; }
  .cell { display: flex; align-items: center; justify-content: center; text-align: center; }
  .head .cell { white-space: normal; padding: 2px 20px 0; }
  .head .right { justify-content: flex-end; }
  .head .cell:not(:nth-child(5)) { white-space: nowrap; }
  .m { font-weight: 600; }
  .cap { letter-spacing: 0; }
  .tag { font-size: 14.500px; line-height: 20px; font-weight: 600; color: #1e40af; background: #dbeafe; border-radius: 26px; }
  .new { width: 77px; height: 52px; border: 1px solid #e5e5e5; padding-top: 6px; }
  .planned { width: 77px; height: 32px; line-height: 33px; margin-right: 1px; }
  .acts { gap: 6px; justify-content: flex-start; padding-left: 11px; }
  .acts button { width: 34px; height: 34px; }
  .blue { color: #2563eb; } .green { color: #16a34a; } .red { color: #ef4444; }

  .scroll { width: 19px; background: #fcfcfc; display: flex; flex-direction: column; align-items: center; padding: 7px 0 5px; }
  .thumb { width: 11px; height: 523px; border-radius: 6px; background: #8b8b8b; margin: 7px 0 auto; }

  .taskbar { height: 60px; background: #d9e1f3; border-top: 1px solid #a9b0c4; display: flex; align-items: center; padding-left: 363px; }
  .win { margin-right: 17px; margin-top: 1px; }
  .tsearch { width: 274px; height: 39px; border-radius: 20px; background: #f4f7fd; border: 1px solid #c3cde4; display: flex; align-items: center; gap: 12px; padding-left: 13px; font-size: 17px; letter-spacing: -.2px; color: #444; margin-right: 3.500px; flex: none; }
  .task { position: relative; width: 55px; height: 59px; display: grid; place-items: center; flex: none; }
  .tile { position: relative; width: 48px; height: 48px; border-radius: 6px; display: grid; place-items: center; }
  .active .tile { background: #edf2fb; }
  .task i { position: absolute; left: 23px; bottom: 6px; width: 8px; height: 4px; border-radius: 2px; background: #7d818c; }
  .task.active i { left: 18px; width: 19px; background: #0a78d4; }
  .badge { position: absolute; right: 3px; top: 2px; width: 20px; height: 20px; border-radius: 50%; color: #fff; font-size: 12.500px; display: grid; place-items: center; background: #0a7ad8; }
  .bP { background: #ab47bc; } .bK { background: #33691e; }
  .tray { display: flex; align-items: center; flex: 1; font-size: 14.500px; line-height: 20px; color: #1b1b1b; padding-left: 84px; }
  .lang { width: 40px; text-align: center; margin: 0 17px 0 21px; }
  .snd { margin: 0 9px 0 10px; }
  .clock { text-align: right; width: 99px; font-size: 15px; padding-bottom: 4px; }
  .bell { margin-left: 9px; margin-top: -2px; }
</style>
